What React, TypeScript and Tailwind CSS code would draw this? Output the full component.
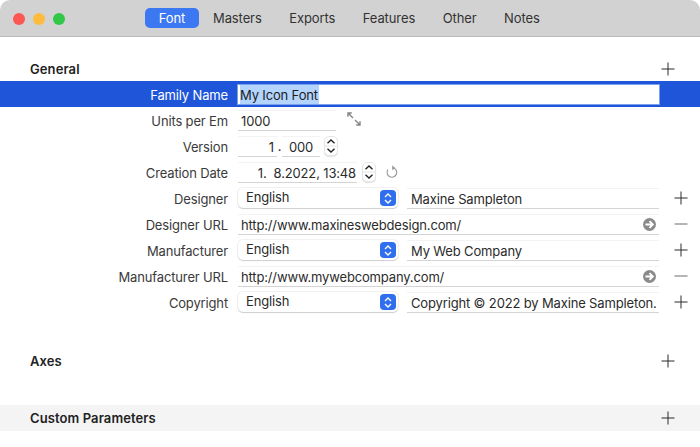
const textClass = "text-[13px] tracking-[-0.15px] leading-[20px]";
const labelClass = `w-[228px] shrink-0 pt-[1px] text-right text-[#3a3a3a] ${textClass}`;
const fieldClass = `flex h-[21px] items-center border-b border-b-[#d4d4d4] border-t border-t-[#f3f3f3] bg-white pt-[1px] text-[#2b2b2b] ${textClass}`;

const Plus = () => (
  <svg width="14" height="14" viewBox="0 0 14 14" className="shrink-0">
    <path d="M7 0.5V13.5M0.5 7H13.5" stroke="#2a2a2a" strokeWidth="1" fill="none" />
  </svg>
);

const Minus = () => (
  <svg width="14" height="14" viewBox="0 0 14 14" className="shrink-0">
    <path d="M0.5 7H13.5" stroke="#6a6a6a" strokeWidth="1" fill="none" />
  </svg>
);

const ArrowCircle = () => (
  <svg width="13" height="13" viewBox="0 0 13 13" className="shrink-0">
    <circle cx="6.5" cy="6.5" r="6.5" fill="#8a8a8a" />
    <path d="M2.5 6.5H9M6.5 3.2L9.8 6.5L6.5 9.8" stroke="#fff" strokeWidth="1.9" fill="none" />
  </svg>
);

const Stepper = () => (
  <div className="flex h-[20px] w-[14px] shrink-0 items-center justify-center rounded-[5px] border border-[#e6e6e6] bg-white shadow-[0_1px_1px_rgba(0,0,0,0.12)]">
    <svg width="12" height="18" viewBox="0 0 12 18">
      <path d="M2.5 6.2L6 3L9.5 6.2M2.5 11.8L6 15L9.5 11.8" stroke="#222" strokeWidth="1.4" fill="none" />
      <path d="M0 9H12" stroke="#e4e4e4" strokeWidth="1" fill="none" />
    </svg>
  </div>
);

const LanguageSelect = () => (
  <div className="flex h-[20px] w-[160px] shrink-0 items-center justify-between rounded-[5px] bg-white pl-2 pr-[2px] text-[#2b2b2b] shadow-[0_0_0_1px_rgba(0,0,0,0.06),0_1px_1px_rgba(0,0,0,0.14)]">
    <span className={`-mt-[2px] ${textClass}`}>English</span>
    <div className="flex h-[16px] w-[16px] items-center justify-center rounded-[4px] bg-[#2f6fee]">
      <svg width="8" height="13" viewBox="0 0 8 13">
        <path d="M1 5L4 2L7 5M1 8L4 11L7 8" stroke="#fff" strokeWidth="1.4" fill="none" />
      </svg>
    </div>
  </div>
);

const Row = ({ label, children }: { label: string; children: React.ReactNode }) => (
  <div className="flex h-[26px] items-center">
    <div className={labelClass}>{label}</div>
    <div className="ml-[10px] flex flex-1 items-center">{children}</div>
  </div>
);

const LocalizedRow = ({ label, value }: { label: string; value: string }) => (
  <Row label={label}>
    <LanguageSelect />
    <div className={`${fieldClass} ml-[9px] w-[252px] overflow-hidden whitespace-nowrap pl-[4px]`}>{value}</div>
    <div className="ml-[15px]">
      <Plus />
    </div>
  </Row>
);

const UrlRow = ({ label, value }: { label: string; value: string }) => (
  <Row label={label}>
    <div className={`${fieldClass} w-[421px] justify-between pl-[3px] pr-[3px]`}>
      <span>{value}</span>
      <ArrowCircle />
    </div>
    <div className="ml-[15px]">
      <Minus />
    </div>
  </Row>
);

const SectionHeader = ({ title }: { title: string }) => (
  <div className="flex h-[20px] items-center justify-between pl-[30px] pr-[25px]">
    <span className="pt-[2px] text-[13px] font-semibold tracking-[0.1px] text-[#222]">{title}</span>
    <Plus />
  </div>
);

const tabs = ["Masters", "Exports", "Features", "Other", "Notes"];

export default function App() {
  return (
    <div className="h-[447px] w-[700px] overflow-hidden bg-white font-['Inter',sans-serif]">
      <div className="relative flex h-[37px] items-center rounded-t-[10px] border-b border-[#b9b9b9] bg-[#d2d2d2] pl-[145px]">
        <div className="absolute left-[13px] top-[13px] flex gap-[8px]">
          <div className="h-[12px] w-[12px] rounded-full bg-[#fc5753]" />
          <div className="h-[12px] w-[12px] rounded-full bg-[#fdbc40]" />
          <div className="h-[12px] w-[12px] rounded-full bg-[#33c748]" />
        </div>
        <div className="flex items-center text-[13px] leading-[20px] tracking-[-0.1px] text-[#333]">
          <div className="flex h-[20px] w-[54px] items-center justify-center rounded-[5px] bg-[#3b78f2] text-white">
            Font
          </div>
          <div className="flex items-center gap-[27.5px] pl-[14px]">
            {tabs.map((tab) => (
              <span key={tab}>{tab}</span>
            ))}
          </div>
        </div>
      </div>

      <div className="pt-[22px]">
        <SectionHeader title="General" />
      </div>

      <div className="mt-[2px] flex h-[26px] items-start bg-[#1f55d9] pt-[4px]">
        <div className={`w-[228px] shrink-0 text-right text-white ${textClass}`}>Family Name</div>
        <div className={`ml-[10px] flex h-[19px] w-[421px] items-center bg-white text-[#1c1c1c] outline outline-1 outline-[#7ba0ee] ${textClass}`}>
          <span className="ml-[2px] bg-[#b3d4fd] pr-[1px]">My Icon Font</span>
        </div>
      </div>

      <Row label="Units per Em">
        <div className={`${fieldClass} w-[98px] pl-[3px]`}>1000</div>
        <svg width="14" height="14" viewBox="0 0 14 14" className="ml-[11px] -mt-[3px]">
          <path d="M1 1L6 6M1 4.8V1H4.8M13 13L8 8M13 9.2V13H9.2" stroke="#858585" strokeWidth="1.4" fill="none" />
        </svg>
      </Row>

      <Row label="Version">
        <div className={`${fieldClass} w-[39px] justify-end pr-[3px]`}>1</div>
        <span className={`w-[5px] text-center text-[#2b2b2b] ${textClass}`}>.</span>
        <div className={`${fieldClass} w-[38px] justify-center`}>000</div>
        <div className="ml-[4px]">
          <Stepper />
        </div>
      </Row>

      <Row label="Creation Date">
        <div className={`${fieldClass} w-[119px] justify-end whitespace-pre pr-[1px]`}>1.  8.2022, 13:48</div>
        <div className="ml-[5px]">
          <Stepper />
        </div>
        <svg width="14" height="14" viewBox="0 0 14 14" className="ml-[9px]">
          <path d="M8.8 3A4.8 4.8 0 1 1 3 4.6" stroke="#9a9a9a" strokeWidth="1.1" fill="none" />
          <path d="M7.2 0.2L10.2 3L7.2 5.2Z" fill="#9a9a9a" />
        </svg>
      </Row>

      <LocalizedRow label="Designer" value="Maxine Sampleton" />
      <UrlRow label="Designer URL" value="http://www.maxineswebdesign.com/" />
      <LocalizedRow label="Manufacturer" value="My Web Company" />
      <UrlRow label="Manufacturer URL" value="http://www.mywebcompany.com/" />
      <LocalizedRow label="Copyright" value="Copyright © 2022 by Maxine Sampleton." />

      <div className="pt-[36px]">
        <SectionHeader title="Axes" />
      </div>

      <div className="mt-[34px] flex h-[26px] flex-col justify-center bg-[#f4f4f4]">
        <SectionHeader title="Custom Parameters" />
      </div>
    </div>
  );
}
